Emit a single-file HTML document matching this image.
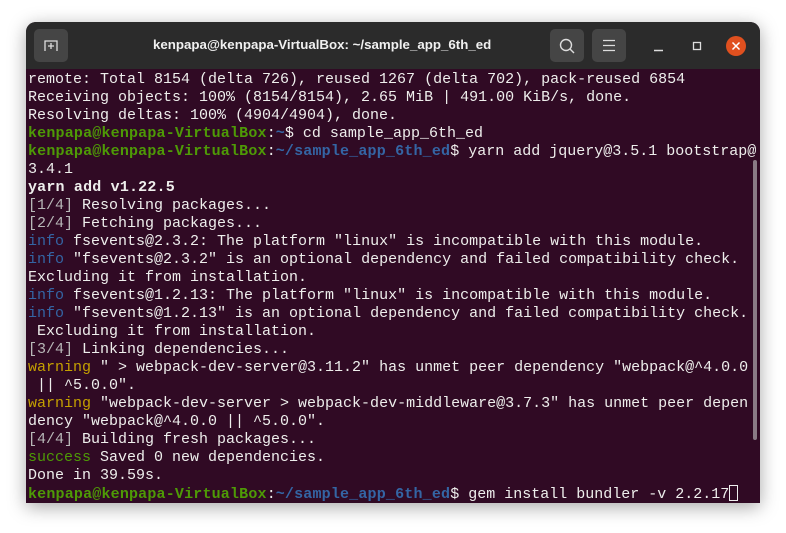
<!DOCTYPE html>
<html><head><meta charset="utf-8"><style>
html,body{margin:0;padding:0;width:786px;height:533px;background:#fff;overflow:hidden}
.win{position:absolute;left:26px;top:22px;width:734px;height:481px;border-radius:10px 10px 0 0;overflow:hidden;box-shadow:0 4px 18px rgba(0,0,0,.35);background:#300a24}
.tb{position:absolute;left:0;top:0;width:734px;height:47px;background:#2b2b2b}
.title{position:absolute;left:127px;top:15px;white-space:nowrap;color:#f0f0f0;font:bold 13.3px "Liberation Sans",sans-serif}
.btn{position:absolute;top:7px;width:34px;height:33px;background:#454545;border-radius:5px}
.term{position:absolute;left:2px;top:49px;font:15px/18px "Liberation Mono",monospace;color:#eeeeec;white-space:pre}
.g{color:#4e9a06;font-weight:bold;letter-spacing:.18px}.b{color:#3465a4;font-weight:bold;letter-spacing:.18px}
.gr{color:#b8b8b8}.y{color:#c4a000}.i{color:#3465a4}.s{color:#4e9a06}.w{font-weight:bold;letter-spacing:.18px}
.cur{display:inline-block;width:9px;height:16px;border:1px solid #eee;vertical-align:-3px;box-sizing:border-box}
</style></head><body>
<div class="win">
<div class="tb">
<div class="btn" style="left:8px"><svg width="34" height="33"><path d="M11 22V12h12v10M17 14v6M14 17h6" stroke="#ddd" stroke-width="1.3" fill="none"/></svg></div>
<div class="title">kenpapa@kenpapa-VirtualBox: ~/sample_app_6th_ed</div>
<div class="btn" style="left:524px"><svg width="34" height="33"><circle cx="16" cy="16" r="5.5" stroke="#ddd" stroke-width="1.4" fill="none"/><path d="M20 20l4 4" stroke="#ddd" stroke-width="1.4"/></svg></div>
<div class="btn" style="left:566px"><svg width="34" height="33"><path d="M11 11.5h12M11 16.5h12M11 21.5h12" stroke="#ddd" stroke-width="1.3"/></svg></div>
<svg style="position:absolute;left:620px;top:12px" width="110" height="26"><path d="M8 16.5h9" stroke="#ddd" stroke-width="1.4"/><rect x="47.5" y="8.5" width="7" height="7" stroke="#ddd" stroke-width="1.3" fill="none"/><circle cx="90" cy="12" r="10" fill="#e0501f"/><path d="M86.5 8.5l7 7M93.5 8.5l-7 7" stroke="#fff" stroke-width="1.5"/></svg>
</div>
<div class="term">remote: Total 8154 (delta 726), reused 1267 (delta 702), pack-reused 6854
Receiving objects: 100% (8154/8154), 2.65 MiB | 491.00 KiB/s, done.
Resolving deltas: 100% (4904/4904), done.
<span class="g">kenpapa@kenpapa-VirtualBox</span>:<span class="b">~</span>$ cd sample_app_6th_ed
<span class="g">kenpapa@kenpapa-VirtualBox</span>:<span class="b">~/sample_app_6th_ed</span>$ yarn add jquery@3.5.1 bootstrap@
3.4.1
<span class="w">yarn add v1.22.5</span>
<span class="gr">[1/4]</span> Resolving packages...
<span class="gr">[2/4]</span> Fetching packages...
<span class="i">info</span> fsevents@2.3.2: The platform "linux" is incompatible with this module.
<span class="i">info</span> "fsevents@2.3.2" is an optional dependency and failed compatibility check.
Excluding it from installation.
<span class="i">info</span> fsevents@1.2.13: The platform "linux" is incompatible with this module.
<span class="i">info</span> "fsevents@1.2.13" is an optional dependency and failed compatibility check.
 Excluding it from installation.
<span class="gr">[3/4]</span> Linking dependencies...
<span class="y">warning</span> " &gt; webpack-dev-server@3.11.2" has unmet peer dependency "webpack@^4.0.0
 || ^5.0.0".
<span class="y">warning</span> "webpack-dev-server &gt; webpack-dev-middleware@3.7.3" has unmet peer depen
dency "webpack@^4.0.0 || ^5.0.0".
<span class="gr">[4/4]</span> Building fresh packages...
<span class="s">success</span> Saved 0 new dependencies.
Done in 39.59s.
<span class="g">kenpapa@kenpapa-VirtualBox</span>:<span class="b">~/sample_app_6th_ed</span>$ gem install bundler -v 2.2.17<span class="cur"></span></div>
<div style="position:absolute;right:3px;top:138px;width:4px;height:280px;background:#8a7a85;border-radius:2px"></div>
</div>
</body></html>
